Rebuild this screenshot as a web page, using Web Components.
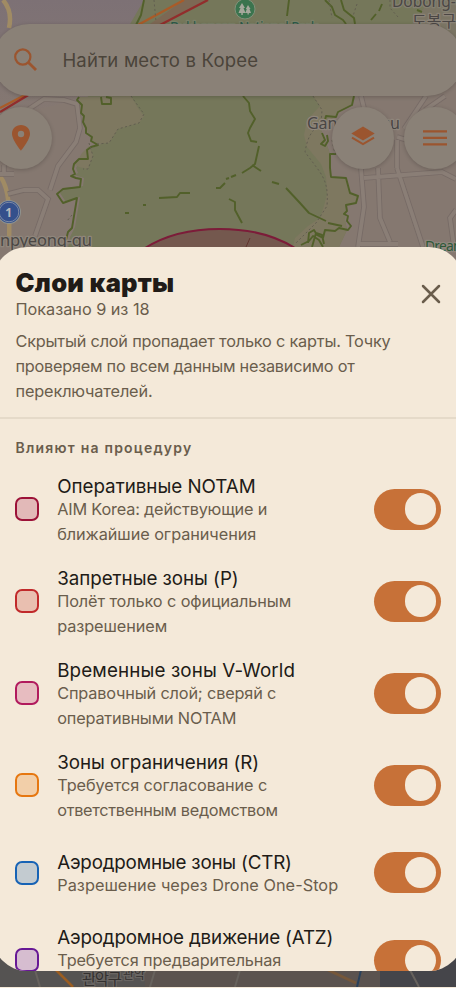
<!DOCTYPE html>
<html lang="ru"><head><meta charset="utf-8"><title>Слои карты</title>
<style>
html,body{margin:0;height:100%;overflow:hidden;background:#f4e9d9}
body{font-family:Inter,"Noto Sans CJK KR",sans-serif}
</style></head><body>
<map-screen>
  <map-canvas slot="map"></map-canvas>
  <search-bar slot="top"><fit-text w="195">Найти место в Корее</fit-text></search-bar>
  <map-tools slot="top"></map-tools>
  <layer-sheet slot="sheet">
    <fit-text slot="title" w="158">Слои карты</fit-text>
    <fit-text slot="count" w="133">Показано 9 из 18</fit-text>
    <fit-text slot="note" w="374">Скрытый слой пропадает только с карты. Точку</fit-text>
    <fit-text slot="note" w="338">проверяем по всем данным независимо от</fit-text>
    <fit-text slot="note" w="136">переключателей.</fit-text>
    <fit-text slot="group" w="176">Влияют на процедуру</fit-text>
    <layer-row style="--c:#9c1238;--f:#e2b9b8"><fit-text slot="name" w="197.5">Оперативные NOTAM</fit-text><fit-text w="209">AIM Korea: действующие и</fit-text><fit-text w="198">ближайшие ограничения</fit-text></layer-row>
    <layer-row style="--c:#c12a2b;--f:#e9bfb0"><fit-text slot="name" w="180.5">Запретные зоны (P)</fit-text><fit-text w="233">Полёт только с официальным</fit-text><fit-text w="109">разрешением</fit-text></layer-row>
    <layer-row style="--c:#b11a5d;--f:#e7bcc0"><fit-text slot="name" w="237">Временные зоны V-World</fit-text><fit-text w="218">Справочный слой; сверяй с</fit-text><fit-text w="178">оперативными NOTAM</fit-text></layer-row>
    <layer-row style="--c:#e67710;--f:#f2cfa9"><fit-text slot="name" w="201">Зоны ограничения (R)</fit-text><fit-text w="209">Требуется согласование с</fit-text><fit-text w="219.5">ответственным ведомством</fit-text></layer-row>
    <layer-row style="--c:#1763b5;--f:#c3cbd0"><fit-text slot="name" w="233.5">Аэродромные зоны (CTR)</fit-text><fit-text w="280">Разрешение через Drone One-Stop</fit-text></layer-row>
    <layer-row style="--c:#671895;--f:#d6bdd0"><fit-text slot="name" w="275">Аэродромное движение (ATZ)</fit-text><fit-text w="223">Требуется предварительная</fit-text><fit-text w="90">координация</fit-text></layer-row>
  </layer-sheet>
</map-screen>
<script>
const define=(name,html,ready)=>customElements.define(name,class extends HTMLElement{
  connectedCallback(){
    if(this.shadowRoot)return;
    this.attachShadow({mode:'open'}).innerHTML=html;
    if(ready)ready(this);
  }
});

define('map-screen',`<style>
:host{display:grid;grid-template:247px 724.4px 15.6px/456px;width:456px;height:987px;overflow:hidden}
.map{grid-area:1/1/4/2}
.top{grid-area:1/1;padding-top:24px;display:flex;flex-direction:column;gap:11px;z-index:1}
.sheet{grid-area:2/1;margin:0 -7px;z-index:2;min-height:0;display:grid}
</style><div class="map"><slot name="map"></slot></div><div class="top"><slot name="top"></slot></div><div class="sheet"><slot name="sheet"></slot></div>`);

define('search-bar',`<style>
:host{display:flex;align-items:center;gap:23.4px;height:72px;box-sizing:border-box;margin:0 -7px;padding:0 18px;border-radius:36px;background:#8a8177;color:#4b443a;font-size:18.5px;box-shadow:0 1px 4px #0003}
svg{width:26px;height:26px;margin-left:2px;flex:none}
</style><svg viewBox="0 0 26 26" fill="none" stroke="#9b552f" stroke-width="2.2"><circle cx="9.8" cy="10" r="7.6"/><path d="M15.2 15.3 23 23.1" stroke-width="2.8"/></svg><slot></slot>`);

define('map-tools',`<style>
:host{display:flex;height:62px;margin:0 -10.5px}
i{width:62px;height:62px;border-radius:50%;background:#8a8177;box-shadow:0 1px 4px #0003;display:grid;place-items:center;flex:none}
.b{margin-left:280.5px}.c{margin-left:10px}
svg{display:block}
</style>
<i><svg width="20" height="28" viewBox="0 0 20 28"><path fill="#9b552f" fill-rule="evenodd" d="M10 1C4.8 1 1 4.8 1 9.8 1 16 10 26.7 10 26.7S19 16 19 9.8C19 4.8 15.2 1 10 1Zm0 5.8a3.2 3.2 0 1 1 0 6.4 3.2 3.2 0 0 1 0-6.4Z"/></svg></i>
<i class="b"><svg width="26" height="22" viewBox="0 0 26 22" style="margin-top:-4px"><path fill="#9b552f" d="M13 1.5 24.7 8.5 13 15.6 1.3 8.5Z"/><path d="m2 12.6 11 6.6 11-6.6" fill="none" stroke="#9b552f" stroke-width="2"/></svg></i>
<i class="c"><svg width="24" height="18" viewBox="0 0 24 18"><path d="M0 2.3h24M0 8.800h24M0 15.300h24" stroke="#9b552f" stroke-width="2.3"/></svg></i>`);

define('layer-sheet',`<style>
:host{display:flex;flex-direction:column;min-height:0;overflow:hidden;border-radius:34px;background:#f4e9d9;color:#6a5d4c}
header{position:relative;box-sizing:border-box;height:172px;flex:none;padding:22px 22.5px 0;border-bottom:2px solid #e5dac9;font-size:16.3px;line-height:25px}
.t{height:28px;line-height:28px;font-size:25.5px;font-weight:900;color:#211b17}
.c{height:25px}.n{margin-top:7px}
svg{position:absolute;right:22.5px;top:37px;width:20px;height:20px}
.g{padding:17px 22.5px 0;height:27px;line-height:24px;font-size:14px;font-weight:600;flex:none}
</style><header><div class="t"><slot name="title"></slot></div><div class="c"><slot name="count"></slot></div><div class="n"><slot name="note"></slot></div>
<svg viewBox="0 0 20 20"><path d="m2 2 16 16M18 2 2 18" stroke="#6a5d4c" stroke-width="2.500" stroke-linecap="round"/></svg></header>
<div class="g"><slot name="group"></slot></div><slot></slot>`);

define('layer-row',`<style>
:host{display:flex;align-items:center;flex:none;box-sizing:border-box;min-height:83.3px;padding:8.5px 22.3px 8.5px 22.2px}
.s{box-sizing:border-box;width:24px;height:24px;border-radius:7px;border:2.4px solid var(--c);background:var(--f);margin-right:18px;flex:none}
.x{flex:1;margin-top:2px;font-size:16.3px;line-height:25px}
.n{font-size:18.8px;line-height:25px;height:23px;color:#211b17}
</style><div class="s"></div><div class="x"><div class="n"><slot name="name"></slot></div><slot></slot></div><toggle-switch></toggle-switch>`);

define('toggle-switch',`<style>
:host{display:flex;align-items:center;justify-content:flex-end;box-sizing:border-box;width:67px;height:41px;padding-right:4.6px;border-radius:21px;background:#c77138;flex:none}
b{width:31.6px;height:31.6px;border-radius:50%;background:#f4e9d9}
</style><b></b>`);

define('map-canvas',`<style>:host{display:block;width:456px;height:987px}svg{display:block}
text{font-family:"Noto Sans","Noto Sans CJK KR",sans-serif;paint-order:stroke;stroke:#8f867c;stroke-width:2.5px;stroke-linejoin:round;fill:#4a4644}</style>
<svg width="456" height="987" viewBox="0 0 456 987">
<defs><linearGradient id="lilac" x1="0" y1="0" x2="0" y2="1"><stop offset="0" stop-color="#7d7175"/><stop offset="1" stop-color="#857871"/></linearGradient></defs>
<rect width="456" height="987" fill="#857870"/>
<path d="M0 0h144l-8 26-50 72-86 20Z" fill="url(#lilac)"/>
<path d="M144 0H456V30L400 60 354 96l-2 9-14 7-2 5-16 7 2 9 6 15 2 6 1 23 15 1 4 15 8 3-2 7-10 2-1 15 2 10-8 17H68l2-10 5-10 5-30-14 5-6-9 6-5 17-2 1-8-10-3 4-2-2-5 6-10 9 0-1-9 11-5-7-8-6-17-4-16 2-3Z" fill="#75775a"/>
<path d="M400 40 430 0h26v40Z" fill="#7b7564"/>
<path d="m79 97 52-1 7 12 6 8-5 7-21 6-9 14-14 1-5-6-6-17-4-16Z" fill="#7e7860"/>
<path d="m89 146 4 9-5 14-9-2-4-2 7-12Z" fill="#7e7860"/>
<path d="m313 96 41 0-2 9-14 7-2 5-16 7 2 9 6 15 2 6 1 23 15 1 4 15 8 3-2 7-10 2-1 15 2 10-8 17H293l2-9 13-12 12-8 4-12 3-12-1-17-5-13-14-17-3-12 3-15 13-14Z" fill="#7e7860"/>
<path d="M150 24 184 0h24l-45 24Z" fill="#7d6854"/>
<g fill="none">
<path d="M3 0c7 8 8 19 6 28M0 176c9 12 10 30 9 71" stroke="#a08b64" stroke-width="4.5"/>
<g stroke="#776b66" stroke-width="5.5"><path d="M8 194 24 190 38 190 48 199 35 236M50 190 58 166 76 142 80 128 77 104 64 100 44 99 20 115M361 96l3 12M361 168l3 39-6 40M378 168l2 50 10 24M364 178l78-6 14 7M397 168 423 247M456 210l-6 8 4 29M397 140V168M404 129 426 96M445 96l-20 14M397 137l10 3 20 10M358 244l40 0M0 174H14M4 165V174"/></g>
<path d="M8 194 24 190 38 190 48 199 35 236M50 190 58 166 76 142 80 128 77 104 64 100 44 99 20 115M361 96l3 12M361 168l3 39-6 40M378 168l2 50 10 24M364 178l78-6 14 7M397 168 423 247M456 210l-6 8 4 29M397 140V168M404 129 426 96M445 96l-20 14M397 137l10 3 20 10M358 244l40 0M0 174H14M4 165V174" stroke="#8a7e76" stroke-width="3.8"/>
<path d="M0 108 27 94M136 26 184 0" stroke="#a95b28" stroke-width="2.3"/><path d="M0 112 30 94M160 25 208 0" stroke="#922d2c" stroke-width="2.3"/>
<g stroke="#52602a" stroke-width="1.9" stroke-linejoin="round">
<path d="M144 0 141 15 136 25M79 97l-2 3 5 5-1 8 3 3-1 6 3 6 0 5 6 4-1 4 7 4-7 2-4 3 1 9-9 0-5 5-1 5 2 5-4 2 5 2 5 1-1 8-17 2-6 5 6 9 14-5-5 30-4 4-2 8M101 97l1 7h9v-6l-5-1"/>
<path d="M289 0 287 16M325 0l7 7 3 8 8 5 3 4M341 0l3 10 10 8 1 6M243 96l6 7 1 8 5 8-5 9-2 5 3 8 6 1M259 146l-4 18-5 4-8 5M252 165l9 6M354 96l-2 9-14 7-2 5-10-1-1 4M322 133l3 7-4 4 4 2 3-5-1-6M336 154h-6l0 14 1 9 15 1 4 15 8 3-2 7-10 2 1 6-3 3 4 2-1 5 4 5-3 4-9-2-4 3-10-1-2 8-6-3-3-5-5 3-1 10M301 245l8-4 4-5 6 4 4 7M312 247l4-14 6 2 2 9M286 188l14 15 9 10 17 8M328 223l14 3M229 199l6 3 0 8 7 13M159 198l18-1 3-4 10 0M216 188l4 0 5-5M371 20l5-6M379 11l3-7M417 10l5 2M125 213h4M143 205h3M226 179l3-1M231 177l5-2M272 182l7 2"/></g>
<path d="M154 0l2 22M131 96l13 18-5 9-21 6-9 14-12 1M329 0l3 18M357 4l-4 12M390 0l0 8 8 9M313 96l9 14-1 15c-10 4-14 15-16 27l12 16c10 13 11 22 10 38l-11 17-20 20M89 143l4 13-5 13-5 0M332 140l3 14M72 215l-5 6" stroke="#625e50" stroke-width="1" stroke-dasharray="2 2.5"/>
<path d="M145 248C185 222 254 222 295 248V257H145Z" fill="#74584e"/><path d="M145 248C185 222.500 254 222.500 295 248" stroke="#7c1c39" stroke-width="2"/><path d="m250 238-4 9" stroke="#62352f"/>
</g>
<circle cx="245" cy="9" r="10" fill="#3b744e" stroke="#81917a"/><path d="m242 3-3 5h1.500l-2 5h2.800v2h1.500v-2h2.700l-2-5h1.500Zm6 2-2.200 4h1l-1.500 4h2.200v1.500h1.300V13h2.200l-1.500-4h1Z" fill="#a6a89c"/>
<text x="170" y="32" font-size="13.5" textLength="148" style="fill:#2c5a48;stroke:#7b8068">Bukhansan National Park</text>
<text x="392" y="7" font-size="15.500" style="stroke:#848071">Dobong-gu</text><text x="412" y="27" font-size="16" style="stroke:#8a8276">도봉구</text>
<text x="307" y="129" font-size="16" textLength="93">Gangbuk-gu</text>
<text x="0" y="245.500" font-size="16.5" textLength="92">npyeong-gu</text>
<text x="425" y="251" font-size="14" textLength="41" style="fill:#2d5838">Dream</text>
<circle cx="9" cy="212" r="12" fill="#8f938f"/><circle cx="9" cy="212" r="11" fill="#34508c"/><circle cx="9" cy="212" r="9.800" fill="none" stroke="#8490a7" stroke-width=".9"/>
<text x="5.300" y="216.500" font-size="12" font-weight="700" style="fill:#b8b9be;stroke:none">1</text>
<path d="M0 950h145v37H0Z" fill="#555352"/><path d="M145 950h240v37H145Z" fill="#5b534f"/><path d="M380 950h76v37h-76Z" fill="#45454a"/>
<g fill="none" stroke="#67625d" stroke-width="2"><path d="M35 970 40 987M155 970l-5 17M240 970l-5 17M410 970l9 17"/></g>
<path d="m56 970 17 17" stroke="#9b5d21" stroke-width="2.500"/><path d="m328 970 28 13" stroke="#75573a" stroke-width="3"/><path d="m361 970-4 17" stroke="#29415b" stroke-width="2"/>
<text x="82" y="984.500" font-size="15.500" textLength="40" style="stroke:#696562;fill:#33302f">관악구</text><text x="123" y="979" font-size="12" style="stroke:#696562;fill:#33302f">관악</text>
</svg>`);

/* One line of text, tracked so that it fills the given width. */
define('fit-text',`<style>:host{display:block;white-space:nowrap}span{display:inline-block;vertical-align:top}</style><span><slot></slot></span>`,el=>{
  const s=el.shadowRoot.querySelector('span');
  s.style.letterSpacing='0px';
  const n=el.textContent.length;
  s.style.letterSpacing=((+el.getAttribute('w')+1-s.getBoundingClientRect().width)/n).toFixed(3)+'px';
});
</script></body></html>
